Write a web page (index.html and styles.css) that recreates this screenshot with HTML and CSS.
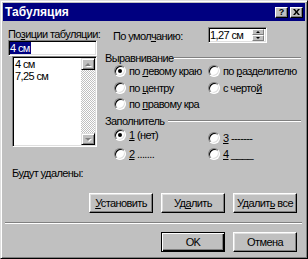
FILE: index.html
```html
<!DOCTYPE html>
<html lang="ru">
<head>
<meta charset="utf-8">
<title>Табуляция</title>
<link rel="stylesheet" href="styles.css">
</head>
<body>
<div class="window">
  <div class="titlebar">
    <span class="title">Табуляция</span>
    <div class="capbtns">
      <span class="capbtn help">?</span>
      <span class="capbtn close"><svg width="7" height="6" viewBox="0 0 7 6"><path d="M0 0h2l1.5 2 1.5-2h2L4.5 3 7 6H5L3.5 4 2 6H0l2.5-3z" fill="#000"/></svg></span>
    </div>
  </div>
  <div class="body">
    <div class="top">
      <div class="left">
        <div class="lbl">По<u>з</u>иции табуляции:</div>
        <div class="field"><span class="sel">4 см</span></div>
        <div class="list">
          <div class="items">
            <div>4 см</div>
            <div>7,25 см</div>
          </div>
          <div class="vscroll">
            <span class="sbtn up"></span>
            <span class="track"></span>
            <span class="sbtn down"></span>
          </div>
        </div>
        <div class="lbl del">Будут удалены:</div>
      </div>
      <div class="right">
        <div class="defrow">
          <span class="deflbl">По умол<u>ч</u>анию:</span>
          <div class="spin">
            <span class="spintext">1,27 см</span>
            <div class="spinbtns">
              <span class="sb sbup"></span>
              <span class="sb sbdn"></span>
            </div>
          </div>
        </div>
        <div class="ghead galign"><span class="gl">Выравнивание</span><span class="etch"></span></div>
        <div class="rgrid ralign">
          <div class="ropt"><span class="radio on"></span><span>по <u>л</u>евому краю</span></div>
          <div class="ropt"><span class="radio"></span><span>по <u>р</u>азделителю</span></div>
          <div class="ropt"><span class="radio"></span><span>по <u>ц</u>ентру</span></div>
          <div class="ropt"><span class="radio"></span><span>с черто<u>й</u></span></div>
          <div class="ropt"><span class="radio"></span><span>по <u>п</u>равому кра</span></div>
        </div>
        <div class="ghead gfill"><span class="gl">Заполнитель</span><span class="etch"></span></div>
        <div class="rgrid rfill">
          <div class="ropt"><span class="radio on"></span><span><u>1</u> (нет)</span></div>
          <div class="ropt shift"><span class="radio"></span><span><u>3</u> -------</span></div>
          <div class="ropt"><span class="radio"></span><span><u>2</u> .......</span></div>
          <div class="ropt"><span class="radio"></span><span><u>4</u> ____</span></div>
        </div>
      </div>
    </div>
    <div class="btnrow row1">
      <span class="btn"><span><u>У</u>становить</span></span>
      <span class="btn"><span>Уд<u>а</u>лить</span></span>
      <span class="btn"><span>Удалит<u>ь</u> все</span></span>
    </div>
    <div class="sep"></div>
    <div class="btnrow row2">
      <span class="btn def"><span>OK</span></span>
      <span class="btn"><span>Отмена</span></span>
    </div>
  </div>
</div>
</body>
</html>
```

FILE: styles.css
```css
* { box-sizing: border-box; }

body {
  margin: 0;
  background: #c0c0c0;
  font-family: "Liberation Sans", Arial, sans-serif;
  font-size: 11px;
  letter-spacing: -0.6px;
  color: #000;
}

u { text-decoration: underline; text-underline-offset: 1px; }

.window {
  width: 308px;
  height: 259px;
  background: #c0c0c0;
  border: 1px solid;
  border-color: #dfdfdf #000 #000 #dfdfdf;
  box-shadow: inset 1px 1px #fff, inset -1px -1px #808080;
  padding: 2px;
  display: flex;
  flex-direction: column;
}

.titlebar {
  height: 18px;
  background: #000080;
  display: flex;
  align-items: center;
  justify-content: space-between;
  padding: 0 2px;
  flex: none;
}

.title {
  color: #fff;
  font-weight: bold;
  font-size: 12px;
  letter-spacing: 0;
  line-height: 18px;
}

.capbtns { display: flex; gap: 2px; }

.capbtn {
  width: 13px;
  height: 11px;
  background: #c0c0c0;
  border: 1px solid;
  border-color: #fff #000 #000 #fff;
  box-shadow: inset -1px -1px #808080;
  display: flex;
  align-items: center;
  justify-content: center;
  font: bold 9px/9px "Liberation Sans", Arial, sans-serif;
  letter-spacing: 0;
}

.body { flex: 1; display: flex; flex-direction: column; }

.top { display: flex; }

.left {
  margin-left: 5px;
  width: 89px;
  padding-top: 7px;
  display: flex;
  flex-direction: column;
}

.lbl { line-height: 12px; white-space: nowrap; }
.del { margin-top: 20px; margin-left: 4px; }

.field {
  height: 16px;
  background: #fff;
  border: 1px solid;
  border-color: #808080 #fff #fff #808080;
  box-shadow: inset 1px 1px #000, inset -1px -1px #dfdfdf;
  padding: 1px;
  line-height: 12px;
  white-space: nowrap;
}

.sel { background: #000080; color: #fff; padding: 0 1px 0 0; display: inline-block; height: 12px; }

.list {
  margin-left: 4px;
  height: 91px;
  display: flex;
  background: #fff;
  border: 1px solid;
  border-color: #808080 #fff #fff #808080;
  box-shadow: inset 1px 1px #000, inset -1px -1px #dfdfdf;
  padding: 1px;
}

.items { flex: 1; padding-left: 1px; line-height: 12px; white-space: nowrap; }

.vscroll { width: 14px; display: flex; flex-direction: column; }

.sbtn {
  height: 12px;
  flex: none;
  background: #c0c0c0;
  border: 1px solid;
  border-color: #dfdfdf #000 #000 #dfdfdf;
  box-shadow: inset 1px 1px #fff, inset -1px -1px #808080;
  display: flex;
  align-items: center;
  justify-content: center;
}

.sbtn::before {
  content: "";
  width: 0;
  height: 0;
  border-left: 3px solid transparent;
  border-right: 3px solid transparent;
  filter: drop-shadow(1px 1px 0 #fff);
}
.sbtn.up::before { border-bottom: 3px solid #808080; }
.sbtn.down::before { border-top: 3px solid #808080; }

.track {
  flex: 1;
  background: repeating-conic-gradient(#c0c0c0 0 25%, #fff 0 50%) 0 0 / 2px 2px;
}

.right {
  margin-left: 8px;
  width: 197px;
  padding-top: 6px;
  display: flex;
  flex-direction: column;
}

.defrow { display: flex; height: 16px; }

.deflbl {
  margin-left: 8px;
  width: 95px;
  padding-top: 3px;
  line-height: 12px;
  white-space: nowrap;
}

.spin {
  width: 59px;
  height: 16px;
  display: flex;
  background: #fff;
  border: 1px solid;
  border-color: #808080 #fff #fff #808080;
  box-shadow: inset 1px 1px #000, inset -1px -1px #dfdfdf;
  padding: 1px 2px 1px 1px;
}

.spintext { flex: 1; line-height: 12px; white-space: nowrap; }

.spinbtns { width: 12px; display: flex; flex-direction: column; }

.sb {
  flex: 1;
  background: #c0c0c0;
  border: 1px solid;
  border-color: #fff #808080 #808080 #fff;
  display: flex;
  align-items: center;
  justify-content: center;
}
.sb::before {
  content: "";
  width: 0;
  height: 0;
  border-left: 2px solid transparent;
  border-right: 2px solid transparent;
}
.sbup::before { border-bottom: 2px solid #000; }
.sbdn::before { border-top: 2px solid #000; }

.ghead {
  display: flex;
  align-items: center;
  height: 12px;
  line-height: 12px;
  white-space: nowrap;
}
.galign { margin-top: 9px; }
.galign .gl { width: 69px; }
.gfill { margin-top: 5px; }
.gfill .gl { width: 63px; }

.etch {
  flex: 1;
  height: 2px;
  border-top: 1px solid #808080;
  border-bottom: 1px solid #fff;
  margin-right: 1px;
}

.rgrid {
  display: grid;
  grid-template-columns: 94px auto;
  padding-left: 9px;
}
.ralign { margin-top: 1px; grid-template-rows: 17px 16px 12px; }
.rfill { margin-top: 2px; grid-template-rows: 19px 12px; }

.ropt {
  display: flex;
  align-items: center;
  gap: 3px;
  height: 12px;
  line-height: 12px;
  white-space: nowrap;
}
.ropt.shift { margin-top: 3px; }

.radio {
  width: 12px;
  height: 12px;
  flex: none;
  border-radius: 50%;
  background: #fff;
  border: 1px solid;
  border-color: #808080 #fff #fff #808080;
  box-shadow: inset 1px 1px #000, inset -1px -1px #dfdfdf;
  display: flex;
  align-items: center;
  justify-content: center;
}
.radio.on::after {
  content: "";
  width: 4px;
  height: 4px;
  border-radius: 50%;
  background: #000;
}

.btnrow {
  display: flex;
  justify-content: flex-end;
  gap: 8px;
  padding-right: 8px;
}
.row1 { margin-top: 14px; }
.row2 { margin-top: 8px; }

.btn {
  width: 64px;
  height: 20px;
  background: #c0c0c0;
  border: 1px solid;
  border-color: #fff #000 #000 #fff;
  box-shadow: inset -1px -1px #808080, inset 1px 1px #dfdfdf;
  display: flex;
  align-items: center;
  justify-content: center;
  line-height: 12px;
  white-space: nowrap;
}
.btn.def {
  border-color: #000;
  box-shadow: inset 1px 1px #fff, inset -1px -1px #000, inset -2px -2px #808080;
}

.sep {
  height: 2px;
  margin: 9px 3px 0 2px;
  border-top: 1px solid #808080;
  border-bottom: 1px solid #fff;
}
```
